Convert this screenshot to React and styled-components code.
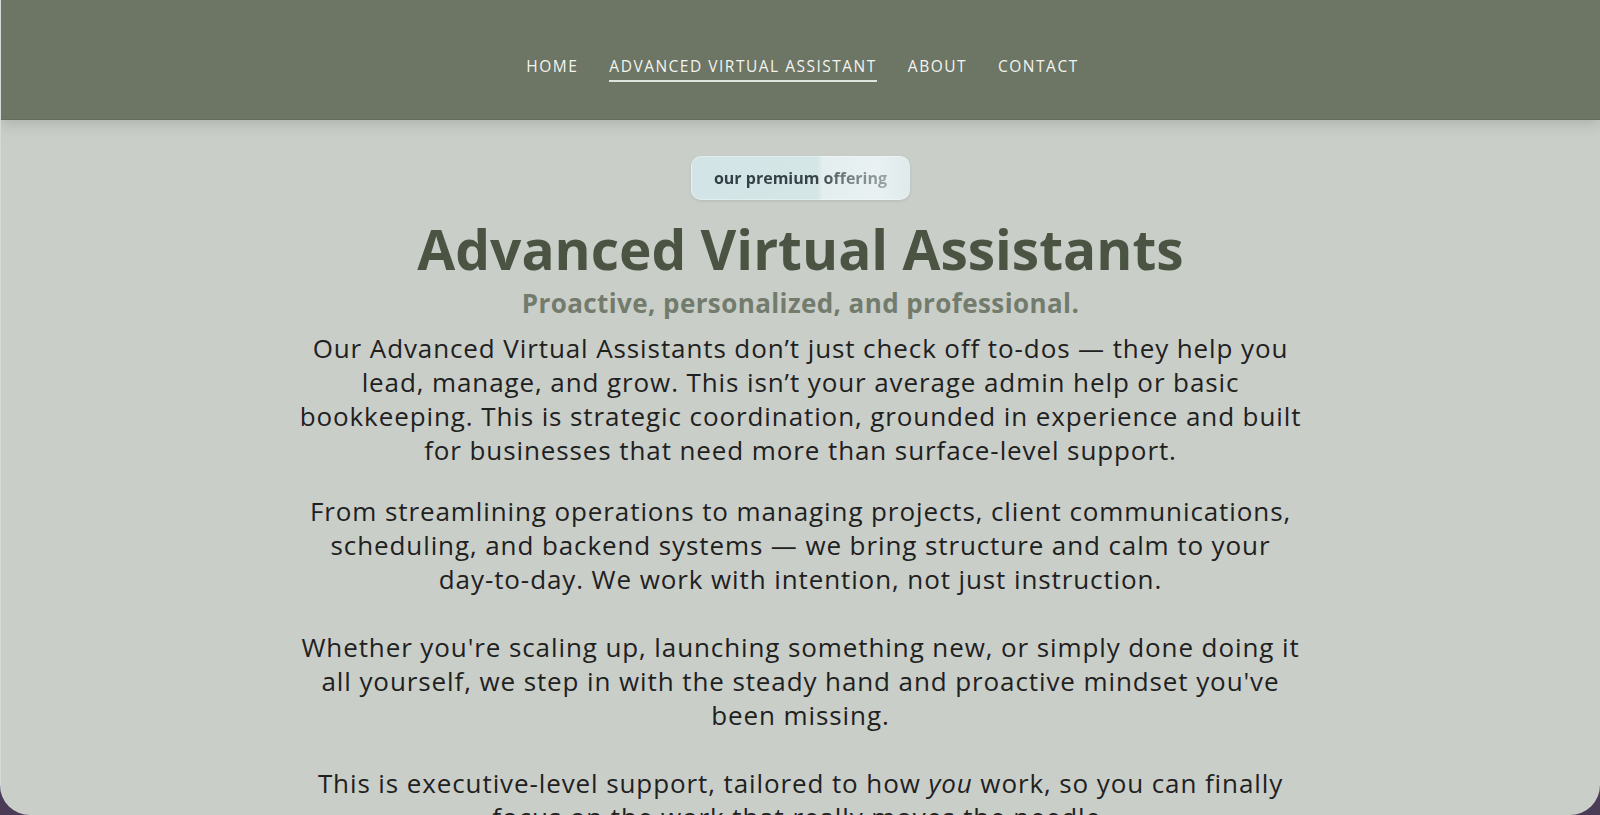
import styled, { createGlobalStyle } from "styled-components";

const GlobalStyle = createGlobalStyle`
  html, body {
    margin: 0;
    padding: 0;
    background: #4a3b57;
    font-family: "Open Sans", "Liberation Sans", sans-serif;
  }
`;

const Frame = styled.div`
  height: 100vh;
  overflow: hidden;
  background: #c9cec9;
  border-radius: 0 0 30px 30px;
  border-left: 1px solid rgba(255, 255, 255, 0.25);
  box-sizing: border-box;
`;

const Header = styled.header`
  position: relative;
  z-index: 1;
  height: 119px;
  background: #6d7565;
  display: flex;
  justify-content: center;
  align-items: center;
  box-shadow: 0 3px 14px rgba(60, 70, 55, 0.22);
  border-bottom: 1px solid #646c5d;
`;

const Nav = styled.nav`
  display: flex;
  gap: 31px;
  padding-left: 4px;
  margin-top: 14px;
`;

const NavLink = styled.a`
  color: #f3f4ef;
  font-size: 15.5px;
  letter-spacing: 1.5px;
  text-transform: uppercase;
  text-decoration: none;
  padding: 4px 0 3px;
  border-bottom: 2px solid ${(p) => (p.$active ? "#dfe4dc" : "transparent")};
`;

const Main = styled.main`
  display: flex;
  flex-direction: column;
  align-items: center;
  padding-top: 36px;
  text-align: center;
`;

const Badge = styled.div`
  padding: 10px 22px;
  border-radius: 10px;
  background: linear-gradient(
    90deg,
    #d2e4e5 0%,
    #d5e6e7 58%,
    #e4eeef 60%,
    #e9f1f2 85%,
    #dfeaea 100%
  );
  box-shadow: 0 1px 3px rgba(80, 100, 100, 0.18);
  border: 1px solid rgba(255, 255, 255, 0.35);
`;

const BadgeText = styled.span`
  font-size: 16px;
  font-weight: 700;
  background: linear-gradient(90deg, #303f45 0%, #364449 60%, #6d787b 75%, #9aa3a5 100%);
  -webkit-background-clip: text;
  background-clip: text;
  color: transparent;
`;

const Title = styled.h1`
  margin: 16px 0 0;
  font-size: 55px;
  line-height: 66px;
  font-weight: 700;
  color: #4b5443;
`;

const Subtitle = styled.h2`
  margin: 6px 0 0;
  font-size: 26px;
  line-height: 30px;
  letter-spacing: 0.4px;
  font-weight: 700;
  color: #737c6c;
`;

const Body = styled.div`
  width: 1020px;
  margin-top: 13px;
  color: #1f211f;
  font-size: 26px;
  line-height: 34px;
  letter-spacing: 0.9px;
`;

const Para = styled.p`
  margin: 0 0 27px;
`;

const NoWrap = styled.span`
  white-space: nowrap;
`;

const App = () => {
  return (
    <>
      <GlobalStyle />
      <Frame>
        <Header>
          <Nav>
            <NavLink href="#">Home</NavLink>
            <NavLink href="#" $active>
              Advanced Virtual Assistant
            </NavLink>
            <NavLink href="#">About</NavLink>
            <NavLink href="#">Contact</NavLink>
          </Nav>
        </Header>

        <Main>
          <Badge>
            <BadgeText>our premium offering</BadgeText>
          </Badge>
          <Title>Advanced Virtual Assistants</Title>
          <Subtitle>Proactive, personalized, and professional.</Subtitle>

          <Body>
            <Para>
              Our Advanced Virtual Assistants don’t just check off to-dos — they
              help you lead, manage, and grow. This isn’t your average admin help
              or basic bookkeeping. This is strategic coordination, grounded in
              experience and built for businesses that need more than
              surface-level support.
            </Para>
            <Para>
              From streamlining operations to managing projects, client
              communications, scheduling, and backend systems — we bring
              structure and calm to your <NoWrap>day-to-day</NoWrap>. We work
              with intention, not just instruction.
              <br />
              <br />
              Whether you're scaling up, launching something new, or simply done
              doing it all yourself, we step in with the steady hand and
              proactive mindset you've been missing.
              <br />
              <br />
              This is executive-level support, tailored to how <em>you</em>{" "}
              work, so you can finally focus on the work that really moves the
              needle.
            </Para>
          </Body>
        </Main>
      </Frame>
    </>
  );
};

export default App;
